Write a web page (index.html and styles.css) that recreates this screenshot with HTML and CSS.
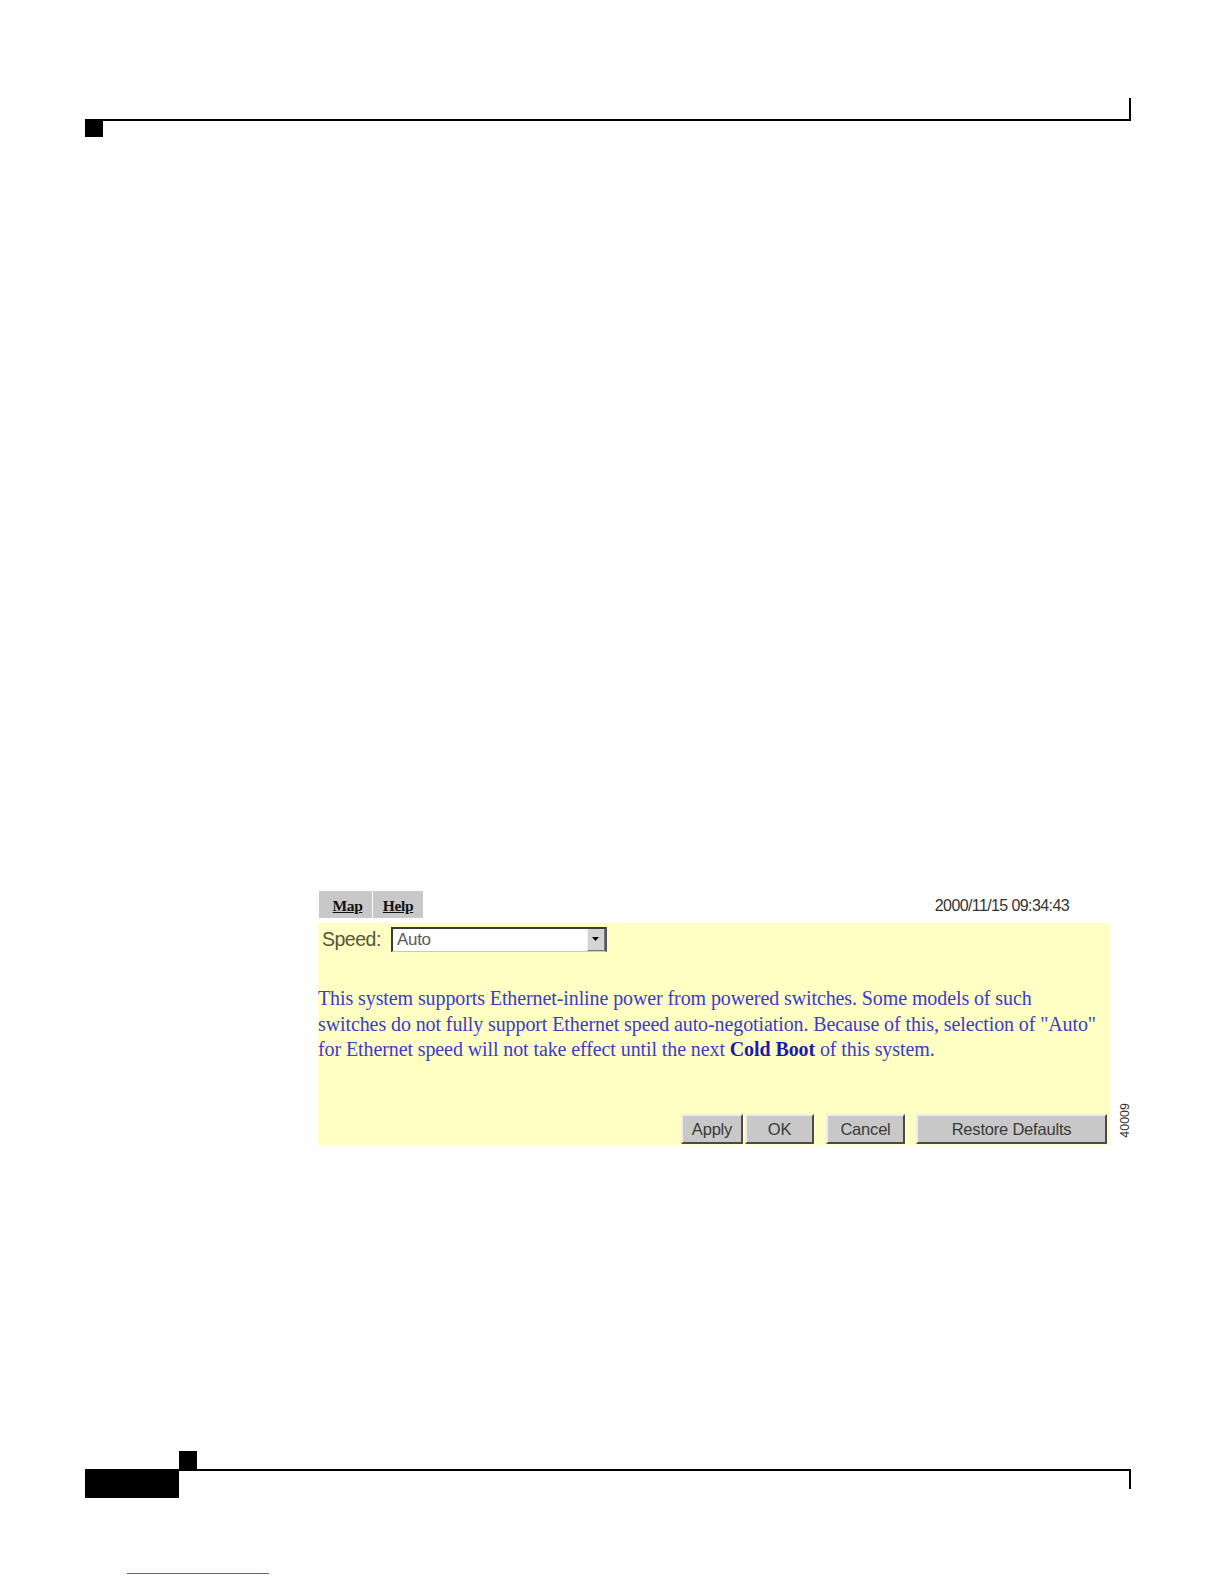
FILE: index.html
```html
<!DOCTYPE html>
<html>
<head>
<meta charset="utf-8">
<title>Speed</title>
<link rel="stylesheet" href="styles.css">
</head>
<body>
<div class="page">
  <div class="hdr"></div>
  <div class="hdr-sq"></div>

  <div class="figure">
    <div class="fig-top">
      <div class="tabs">
        <a class="tab tab-map">Map</a>
        <a class="tab tab-help">Help</a>
      </div>
      <div class="stamp">2000/11/15 09:34:43</div>
    </div>
    <div class="panel">
      <div class="speed-row">
        <span class="speed-label">Speed:</span>
        <div class="select">
          <span class="select-val">Auto</span>
          <span class="select-btn"><svg width="8" height="5" viewBox="0 0 8 5"><path d="M0 0H7L3.5 4Z" fill="#000"/></svg></span>
        </div>
      </div>
      <p class="note">This system supports Ethernet-inline power from powered switches. Some models of such<br>switches do not fully support Ethernet speed auto-negotiation. Because of this, selection of "Auto"<br>for Ethernet speed will not take effect until the next <b>Cold Boot</b> of this system.</p>
      <div class="buttons">
        <button class="btn btn-apply">Apply</button>
        <button class="btn btn-ok">OK</button>
        <button class="btn btn-cancel">Cancel</button>
        <button class="btn btn-restore">Restore Defaults</button>
      </div>
    </div>
    <div class="fig-num">40009</div>
  </div>

  <div class="ftr-sq"></div>
  <div class="ftr-row">
    <div class="ftr-block"></div>
    <div class="ftr-rule"></div>
  </div>
  <div class="link-line"></div>
</div>
</body>
</html>
```
FILE: styles.css
```css
html, body {
  margin: 0;
  padding: 0;
  background: #ffffff;
}

.page {
  width: 1224px;
}

.hdr {
  margin: 98px 0 0 85px;
  width: 1044px;
  height: 21px;
  border-right: 2px solid #000;
  border-bottom: 2px solid #000;
}

.hdr-sq {
  margin-left: 85px;
  width: 18px;
  height: 16px;
  background: #000;
}

.figure {
  position: relative;
  margin: 754px 0 0 318px;
  width: 791px;
}

.fig-top {
  display: flex;
  justify-content: space-between;
  align-items: flex-start;
  height: 27px;
  margin-bottom: 5px;
}

.tabs {
  display: flex;
  gap: 1px;
  margin-left: 1px;
}

.tab {
  display: flex;
  align-items: center;
  justify-content: center;
  height: 27px;
  background: #c8c8c8;
  font-family: "Liberation Serif", serif;
  font-weight: bold;
  font-size: 15.5px;
  letter-spacing: -0.4px;
  color: #111;
  text-decoration: underline;
  padding-top: 3px;
  box-sizing: border-box;
}

.tab-map {
  width: 53px;
  padding-left: 4px;
}

.tab-help {
  width: 50px;
}

.stamp {
  margin-top: 6px;
  margin-right: 40px;
  font-family: "Liberation Sans", sans-serif;
  font-size: 16px;
  line-height: 17px;
  letter-spacing: -0.6px;
  color: #333;
}

.panel {
  display: flex;
  flex-direction: column;
  height: 222px;
  background: #ffffc4;
  padding: 4px 2px 1px 0;
  box-sizing: border-box;
}

.speed-row {
  display: flex;
  align-items: center;
  height: 25px;
  padding-left: 4px;
}

.speed-label {
  width: 69px;
  font-family: "Liberation Sans", sans-serif;
  font-size: 19.5px;
  letter-spacing: -0.5px;
  color: #55553a;
}

.select {
  display: flex;
  align-items: stretch;
  width: 216px;
  height: 25px;
  box-sizing: border-box;
  background: #fff;
  border-top: 2px solid #3a3a3a;
  border-left: 2px solid #3a3a3a;
  border-right: 2px solid #555;
  border-bottom: 1px solid #c8c8c8;
}

.select-val {
  flex: 1;
  padding-left: 4px;
  font-family: "Liberation Sans", sans-serif;
  font-size: 17px;
  line-height: 22px;
  letter-spacing: -0.3px;
  color: #5a5a5a;
}

.select-btn {
  display: flex;
  align-items: center;
  justify-content: center;
  width: 16px;
  background: #d4d4d4;
  border-left: 1px solid #eee;
  border-right: 1px solid #777;
  border-bottom: 1px solid #777;
}

.note {
  margin: 34px 0 0 0;
  font-family: "Liberation Serif", serif;
  font-size: 20px;
  line-height: 25.5px;
  letter-spacing: -0.1px;
  color: #3b3bcc;
  white-space: nowrap;
}

.note b {
  color: #1c1ca8;
}

.buttons {
  display: flex;
  justify-content: flex-end;
  margin-top: auto;
  height: 30px;
}

.btn {
  height: 30px;
  margin: 0;
  padding: 0;
  background: #c8c8c8;
  border-top: 2px solid #ececec;
  border-left: 2px solid #ececec;
  border-right: 2px solid #4a4a4a;
  border-bottom: 2px solid #4a4a4a;
  font-family: "Liberation Sans", sans-serif;
  font-size: 16.5px;
  letter-spacing: -0.2px;
  color: #3a3a3a;
  box-sizing: border-box;
}

.btn-apply { width: 62px; }
.btn-ok { width: 69px; margin-left: 2px; }
.btn-cancel { width: 79px; margin-left: 12px; }
.btn-restore { width: 191px; margin-left: 11px; }

.fig-num {
  position: absolute;
  left: 801px;
  top: 212px;
  writing-mode: vertical-rl;
  transform: rotate(180deg);
  font-family: "Liberation Sans", sans-serif;
  font-size: 12.5px;
  line-height: 12px;
  color: #333;
}

.ftr-sq {
  margin: 306px 0 0 179px;
  width: 18px;
  height: 18px;
  background: #000;
}

.ftr-row {
  display: flex;
  margin-left: 85px;
  width: 1046px;
}

.ftr-block {
  width: 94px;
  height: 29px;
  background: #000;
}

.ftr-rule {
  flex: 1;
  height: 18px;
  border-top: 2px solid #000;
  border-right: 2px solid #000;
}

.link-line {
  margin: 75px 0 0 127px;
  width: 142px;
  height: 1px;
  background: #5a5ad8;
}
```
